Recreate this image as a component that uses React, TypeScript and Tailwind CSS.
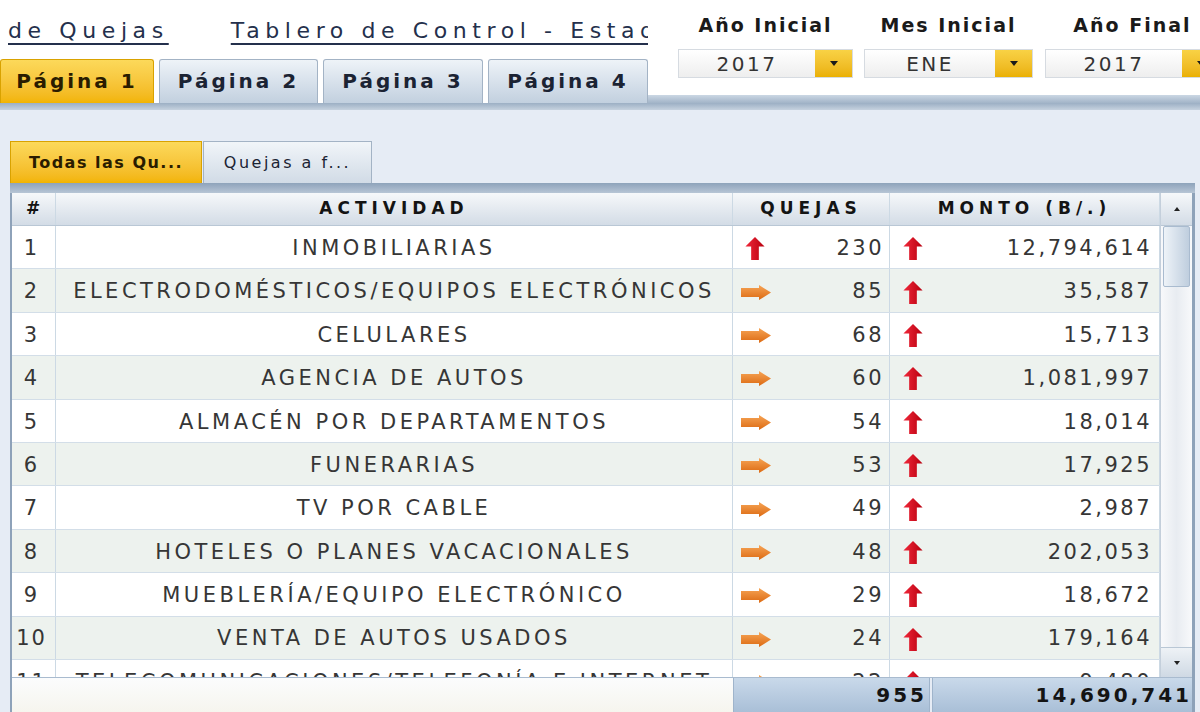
import type { ReactNode } from 'react';

interface Row {
  n: number;
  name: string;
  quejas: number;
  quejasUp: boolean;
  monto: string;
}

const rows: Row[] = [
  { n: 1, name: 'INMOBILIARIAS', quejas: 230, quejasUp: true, monto: '12,794,614' },
  { n: 2, name: 'ELECTRODOMÉSTICOS/EQUIPOS ELECTRÓNICOS', quejas: 85, quejasUp: false, monto: '35,587' },
  { n: 3, name: 'CELULARES', quejas: 68, quejasUp: false, monto: '15,713' },
  { n: 4, name: 'AGENCIA DE AUTOS', quejas: 60, quejasUp: false, monto: '1,081,997' },
  { n: 5, name: 'ALMACÉN POR DEPARTAMENTOS', quejas: 54, quejasUp: false, monto: '18,014' },
  { n: 6, name: 'FUNERARIAS', quejas: 53, quejasUp: false, monto: '17,925' },
  { n: 7, name: 'TV POR CABLE', quejas: 49, quejasUp: false, monto: '2,987' },
  { n: 8, name: 'HOTELES O PLANES VACACIONALES', quejas: 48, quejasUp: false, monto: '202,053' },
  { n: 9, name: 'MUEBLERÍA/EQUIPO ELECTRÓNICO', quejas: 29, quejasUp: false, monto: '18,672' },
  { n: 10, name: 'VENTA DE AUTOS USADOS', quejas: 24, quejasUp: false, monto: '179,164' },
  { n: 11, name: 'TELECOMUNICACIONES/TELEFONÍA E INTERNET', quejas: 22, quejasUp: false, monto: '9,480' },
];

const UpArrow = () => (
  <svg width="20" height="23" viewBox="0 0 20 24" className="shrink-0">
    <defs>
      <linearGradient id="upRed" x1="0" x2="1" y1="0" y2="0">
        <stop offset="0" stopColor="#f0283a" />
        <stop offset="1" stopColor="#b8000f" />
      </linearGradient>
    </defs>
    <polygon points="10,0 20,10 14,10 14,24 6,24 6,10 0,10" fill="url(#upRed)" />
  </svg>
);

const RightArrow = () => (
  <svg width="30" height="15" viewBox="0 0 30 15" className="shrink-0">
    <defs>
      <linearGradient id="rightOrange" x1="0" x2="0" y1="0" y2="1">
        <stop offset="0" stopColor="#f6a455" />
        <stop offset="1" stopColor="#dc6a12" />
      </linearGradient>
    </defs>
    <polygon points="0,3 18,3 18,0 30,7.5 18,15 18,12 0,12" fill="url(#rightOrange)" />
  </svg>
);

const PageTab = ({ label, active, width }: { label: string; active?: boolean; width: string }) => (
  <div
    className={`${width} flex h-[44px] shrink-0 items-center justify-center rounded-t-[3px] border border-b-0 pb-[2px] text-[20px] font-bold tracking-[3px] ${
      active
        ? 'border-[#d9a200] bg-linear-to-b from-[#fcd95a] to-[#f2b400] text-[#2a1c00]'
        : 'border-[#a3b3c5] bg-linear-to-b from-[#eef3f8] to-[#c2d0df] text-[#1b2333]'
    }`}
  >
    {label}
  </div>
);

const Dropdown = ({ label, value, width }: { label: string; value: string; width: string }) => (
  <div className={`${width} flex shrink-0 flex-col items-center`}>
    <div className="h-[22px] text-[19px] font-bold leading-[22px] tracking-[2px] text-[#1a1a1a]">{label}</div>
    <div className="mt-[13px] flex h-[29px] w-full border border-[#d6dbe1] bg-linear-to-b from-[#ffffff] to-[#eeeeee]">
      <div className="flex flex-1 items-center justify-center text-[20px] tracking-[2.5px] text-[#333]">{value}</div>
      <div className="flex w-[37px] items-center justify-center bg-linear-to-b from-[#f9d244] to-[#eab000]">
        <span className="h-0 w-0 border-x-[4px] border-t-[5px] border-x-transparent border-t-[#1a1a1a]" />
      </div>
    </div>
  </div>
);

const Cell = ({ children, className }: { children: ReactNode; className?: string }) => (
  <div className={`flex h-full items-center border-r border-[#ccd9e4] ${className ?? ''}`}>{children}</div>
);

const App = () => {
  return (
    <div className="flex h-[712px] w-[1200px] flex-col overflow-hidden bg-white font-['DejaVu_Sans',sans-serif]">
      {/* header: titles, page tabs and filters */}
      <div className="flex h-[103px] shrink-0">
        <div className="flex w-[648px] shrink-0 flex-col">
          <div className="h-[59px] overflow-hidden whitespace-nowrap pt-[18px] text-[22px] leading-[26px] tracking-[5.6px] text-[#24304c]">
            <span className="ml-[8px] underline decoration-2 underline-offset-[5px]">de Quejas</span>
            <span className="ml-[62px] underline decoration-2 underline-offset-[5px]">
              Tablero de Control - Estadísticas
            </span>
          </div>
          <div className="flex h-[44px] items-end gap-[5px]">
            <PageTab label="Página 1" active width="w-[154px]" />
            <PageTab label="Página 2" width="w-[159px]" />
            <PageTab label="Página 3" width="w-[160px]" />
            <PageTab label="Página 4" width="w-[160px]" />
          </div>
        </div>
        <div className="flex flex-1 flex-col">
          <div className="flex gap-[11px] pl-[30px] pt-[14px]">
            <Dropdown label="Año Inicial" value="2017" width="w-[175px]" />
            <Dropdown label="Mes Inicial" value="ENE" width="w-[169px]" />
            <div className="ml-[1px]">
              <Dropdown label="Año Final" value="2017" width="w-[175px]" />
            </div>
          </div>
          <div className="mt-auto h-[8px] bg-linear-to-b from-[#cbd7e4] to-[#a2b4c8]" />
        </div>
      </div>
      <div className="h-[7px] shrink-0 bg-linear-to-b from-[#9cafc4] to-[#c6d2df]" />

      {/* panel */}
      <div className="flex flex-1 flex-col bg-[#e6ecf5] pl-[10px] pr-[5px] pt-[31px]">
        <div className="flex h-[42px] gap-[1px]">
          <div className="flex w-[192px] items-center justify-center border border-b-0 border-[#d9a200] bg-linear-to-b from-[#fcd95a] to-[#f2b400] text-[16px] font-bold tracking-[1.5px] text-[#2a1c00]">
            Todas las Qu...
          </div>
          <div className="flex w-[169px] items-center justify-center border border-b-0 border-[#a3b3c5] bg-linear-to-b from-[#f1f5f9] to-[#d1dbe6] text-[16px] tracking-[2.5px] text-[#1b2333]">
            Quejas a f...
          </div>
        </div>
        <div className="h-[10px] bg-linear-to-b from-[#8ea3bb] to-[#b7c5d5]" />

        {/* table */}
        <div className="flex flex-1 flex-col border-l-2 border-r-[3px] border-[#8ea2b9] bg-white">
          <div className="flex h-[484px]">
            <div className="flex w-[1148px] flex-col">
              <div className="grid h-[33px] grid-cols-[44px_677px_157px_270px] border-b border-[#b9c7d5] bg-linear-to-b from-[#f6f8fa] to-[#d3dce6] text-[17px] font-bold tracking-[5px] text-[#141414]">
                <Cell className="justify-center border-[#b9c7d5] pl-[4px]">#</Cell>
                <Cell className="justify-center border-[#b9c7d5]">ACTIVIDAD</Cell>
                <Cell className="justify-center border-[#b9c7d5]">QUEJAS</Cell>
                <Cell className="justify-center border-[#b9c7d5]">MONTO (B/.)</Cell>
              </div>
              <div className="h-[451px] overflow-hidden">
                {rows.map((row, i) => (
                  <div
                    key={row.n}
                    className={`grid h-[43.4px] grid-cols-[44px_677px_157px_270px] border-b border-[#d3dee8] text-[21px] text-[#363636] ${
                      i % 2 === 0 ? 'bg-white' : 'bg-[#edf2ee]'
                    }`}
                  >
                    <Cell className="justify-center pr-[4px] pt-[3px] tracking-[2px]">{row.n}</Cell>
                    <Cell className="justify-center pt-[3px] tracking-[3.5px]">{row.name}</Cell>
                    <Cell className="justify-between pl-[8px] pr-[5px] pt-[3px] tracking-[2.5px]">
                      <span className={row.quejasUp ? 'pl-[4px]' : ''}>
                        {row.quejasUp ? <UpArrow /> : <RightArrow />}
                      </span>
                      <span>{row.quejas}</span>
                    </Cell>
                    <Cell className="justify-between pl-[13px] pr-[7px] pt-[3px] tracking-[2.5px]">
                      <UpArrow />
                      <span>{row.monto}</span>
                    </Cell>
                  </div>
                ))}
              </div>
            </div>

            {/* scrollbar */}
            <div className="flex w-[32px] flex-col border-l border-[#c4cfdb] bg-linear-to-r from-[#f8f9fb] via-[#e8ecf1] to-[#f8f9fb]">
              <div className="flex h-[33px] items-center justify-center border-b border-[#b9c7d5] bg-linear-to-b from-[#f6f8fa] to-[#d3dce6]">
                <span className="h-0 w-0 border-x-[3px] border-b-[4px] border-x-transparent border-b-[#222]" />
              </div>
              <div className="mx-[2px] h-[61px] rounded-[2px] border border-[#a9bbcf] bg-linear-to-r from-[#eef3f8] to-[#bfcede]" />
              <div className="flex-1" />
              <div className="flex h-[30px] items-center justify-center border-t border-[#b9c7d5] bg-linear-to-b from-[#eef2f6] to-[#cfd9e4]">
                <span className="h-0 w-0 border-x-[3px] border-t-[4px] border-x-transparent border-t-[#222]" />
              </div>
            </div>
          </div>

          {/* totals */}
          <div className="flex flex-1 border-t border-[#a9bbcf] text-[20px] font-bold tracking-[3px] text-[#141414]">
            <div className="w-[721px] bg-linear-to-b from-[#fbfcfd] to-[#f6f5ee]" />
            <div className="flex w-[197px] items-center justify-end border-x border-[#9fb4cb] bg-linear-to-b from-[#c9d9ea] to-[#a9bfd7] pr-[2px]">
              955
            </div>
            <div className="w-[2px] bg-[#e6ecf5]" />
            <div className="flex flex-1 items-center justify-end border-l border-[#9fb4cb] bg-linear-to-b from-[#c9d9ea] to-[#a9bfd7] pr-[0px]">
              14,690,741
            </div>
          </div>
        </div>
      </div>
    </div>
  );
};

export default App;
